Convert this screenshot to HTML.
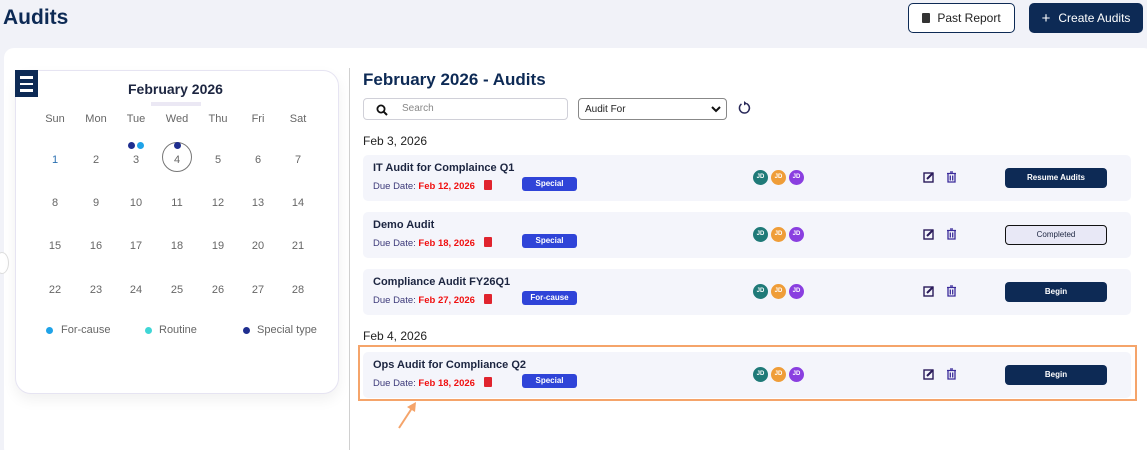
<!DOCTYPE html>
<html><head><style>
*{box-sizing:border-box;margin:0;padding:0}
html,body{width:1147px;height:450px;overflow:hidden}
body{background:#f1f2f8;font-family:"Liberation Sans",sans-serif;position:relative}
.abs{position:absolute}
h1{position:absolute;left:3px;top:6px;font-size:21px;color:#0d2a55;font-weight:bold}
.btn1{left:908px;top:3px;width:107px;height:30px;border:1px solid #0d2a55;border-radius:5px;background:#fff;font-size:12px;color:#222;display:flex;align-items:center;justify-content:center;gap:7px}
.btn2{left:1029px;top:3px;width:114px;height:30px;border-radius:5px;background:#0d2a55;color:#fff;font-size:12px;display:flex;align-items:center;justify-content:center;gap:8px}
.panel{left:4px;top:48px;width:1150px;height:410px;background:#fff;border-radius:10px}
.cal{left:15px;top:70px;width:324px;height:324px;border:1px solid #e6e4f2;border-radius:16px;background:#fff;box-shadow:0 6px 14px rgba(0,0,0,0.06)}
.menu{left:15px;top:70px;width:23px;height:27px;background:#0d2a55}
.menu i{position:absolute;left:5px;width:13px;height:2.5px;background:#fff}
.c{position:absolute;width:40px;text-align:center;font-size:11px;color:#666;transform:translateX(-20px)}
.dot{position:absolute;width:7px;height:7px;border-radius:50%}
.row{position:absolute;left:363px;width:768px;height:46px;background:#f4f5fb;border-radius:5px}
.t{position:absolute;left:10px;top:7px;font-size:11px;font-weight:bold;color:#1c2540}
.d{position:absolute;left:10px;top:26px;font-size:9.5px;color:#3d3a7a}
.d b{color:#f01010}
.pdf{position:absolute;left:121px;top:25px;width:8px;height:10px;background:#e0242e;border-radius:1px}
.tag{position:absolute;left:159px;top:22px;width:55px;height:14px;background:#2f44d8;border-radius:3px;color:#fff;font-size:8px;font-weight:bold;text-align:center;line-height:14px}
.av{position:absolute;top:15px;width:15px;height:15px;border-radius:50%;color:#fff;font-size:6px;font-weight:bold;text-align:center;line-height:15px}
.act{position:absolute;left:642px;top:13px;width:102px;height:20px;border-radius:4px;background:#0d2a55;color:#fff;font-size:8px;font-weight:bold;text-align:center;line-height:20px}
.ic{position:absolute;top:16px}
.date{position:absolute;left:363px;font-size:12px;color:#222}
</style></head><body>
<h1>Audits</h1>
<div class="abs btn1"><span style="display:inline-block;width:8px;height:10px;background:#333;border-radius:1px"></span>Past Report</div>
<div class="abs btn2"><span style="font-size:15px">+</span>Create Audits</div>
<div class="abs panel"></div>
<div class="abs" style="left:-5px;top:252px;width:14px;height:22px;border-radius:50%;background:#fff;border:1px solid #ddd"></div>
<div class="abs cal"></div>
<div class="abs menu"><i style="top:6px"></i><i style="top:12.5px"></i><i style="top:19px"></i></div>
<div class="abs" style="left:128px;top:81px;font-size:14px;font-weight:bold;color:#1c2540">February 2026</div>
<div class="abs" style="left:151px;top:102px;width:50px;height:4px;background:#ebe8f4"></div>
<div style="position:absolute;left:0;top:113px">
<div class="c" style="left:55px">Sun</div><div class="c" style="left:96px">Mon</div><div class="c" style="left:136px">Tue</div><div class="c" style="left:177px">Wed</div><div class="c" style="left:218px">Thu</div><div class="c" style="left:258px">Fri</div><div class="c" style="left:298px">Sat</div>
</div>
<div class="abs" style="left:162px;top:142px;width:30px;height:30px;border:1px solid #777;border-radius:50%"></div>
<div class="dot" style="left:128px;top:142px;background:#1f2e8f"></div>
<div class="dot" style="left:137px;top:142px;background:#1fa3e8"></div>
<div class="dot" style="left:174px;top:142px;background:#1f2e8f"></div>
<div style="position:absolute;left:0;top:154px">
<div class="c" style="left:55px;color:#2a6fb0">1</div><div class="c" style="left:96px">2</div><div class="c" style="left:136px">3</div><div class="c" style="left:177px">4</div><div class="c" style="left:218px">5</div><div class="c" style="left:258px">6</div><div class="c" style="left:298px">7</div>
</div>
<div style="position:absolute;left:0;top:197px">
<div class="c" style="left:55px">8</div><div class="c" style="left:96px">9</div><div class="c" style="left:136px">10</div><div class="c" style="left:177px">11</div><div class="c" style="left:218px">12</div><div class="c" style="left:258px">13</div><div class="c" style="left:298px">14</div>
</div>
<div style="position:absolute;left:0;top:240px">
<div class="c" style="left:55px">15</div><div class="c" style="left:96px">16</div><div class="c" style="left:136px">17</div><div class="c" style="left:177px">18</div><div class="c" style="left:218px">19</div><div class="c" style="left:258px">20</div><div class="c" style="left:298px">21</div>
</div>
<div style="position:absolute;left:0;top:284px">
<div class="c" style="left:55px">22</div><div class="c" style="left:96px">23</div><div class="c" style="left:136px">24</div><div class="c" style="left:177px">25</div><div class="c" style="left:218px">26</div><div class="c" style="left:258px">27</div><div class="c" style="left:298px">28</div>
</div>
<div class="dot" style="left:46px;top:327px;background:#1fa3e8"></div><div class="abs" style="left:61px;top:324px;font-size:11px;color:#666">For-cause</div>
<div class="dot" style="left:145px;top:327px;background:#3fd6d6"></div><div class="abs" style="left:159px;top:324px;font-size:11px;color:#666">Routine</div>
<div class="dot" style="left:243px;top:327px;background:#1f2e8f"></div><div class="abs" style="left:257px;top:324px;font-size:11px;color:#666">Special type</div>
<div class="abs" style="left:349px;top:68px;width:1px;height:382px;background:#d0d0d0"></div>
<div class="abs" style="left:363px;top:70px;font-size:17px;font-weight:bold;color:#0d2a55">February 2026 - Audits</div>
<div class="abs" style="left:363px;top:98px;width:205px;height:22px;border:1px solid #d0d0d8;border-radius:4px;background:#fff">
<svg class="abs" style="left:12px;top:5px" width="12" height="12" viewBox="0 0 12 12"><circle cx="5" cy="5" r="3.6" fill="none" stroke="#111" stroke-width="1.8"/><path d="M7.6 7.6L11 11" stroke="#111" stroke-width="2"/></svg>
<span class="abs" style="left:38px;top:4px;font-size:10px;color:#888">Search</span></div>
<div class="abs" style="left:578px;top:98px;width:149px;height:22px;border:1px solid #888;border-radius:4px;background:#fff">
<span class="abs" style="left:6px;top:5px;font-size:10px;color:#222">Audit For</span>
<svg class="abs" style="left:132px;top:7px" width="10" height="7" viewBox="0 0 10 7"><path d="M1 1l4 4 4-4" stroke="#111" stroke-width="2" fill="none"/></svg></div>
<svg class="abs" style="left:737px;top:100px" width="15" height="16" viewBox="0 0 15 16"><path d="M9.5 3.5A5 5 0 1 1 4.5 4" stroke="#2a2a5a" stroke-width="1.5" fill="none"/><path d="M7 1l3 2.5-3 2z" fill="#2a2a5a"/></svg>
<div class="date" style="top:134px">Feb 3, 2026</div>
<div class="date" style="top:329px">Feb 4, 2026</div>

<div class="row" style="top:155px"><div class="t">IT Audit for Complaince Q1</div><div class="d">Due Date: <b>Feb 12, 2026</b></div><div class="pdf"></div><div class="tag">Special</div>
<div class="av" style="left:390px;background:#1f7a78">JD</div><div class="av" style="left:408px;background:#ef9d38">JD</div><div class="av" style="left:426px;background:#8a3fe0">JD</div>
<svg class="ic" style="left:560px" width="12" height="12" viewBox="0 0 12 12"><rect x="1" y="2" width="9" height="9" fill="none" stroke="#2a1a5a" stroke-width="1.4"/><path d="M4 8l6-6" stroke="#2a1a5a" stroke-width="2"/></svg>
<svg class="ic" style="left:583px" width="11" height="12" viewBox="0 0 11 12"><path d="M1 2.5h9M4 1h3M2 3v8h7V3M4.3 4.5v5M6.7 4.5v5" stroke="#3a2a9a" stroke-width="1.3" fill="none"/></svg>
<div class="act">Resume Audits</div></div>

<div class="row" style="top:212px"><div class="t">Demo Audit</div><div class="d">Due Date: <b>Feb 18, 2026</b></div><div class="pdf"></div><div class="tag">Special</div>
<div class="av" style="left:390px;background:#1f7a78">JD</div><div class="av" style="left:408px;background:#ef9d38">JD</div><div class="av" style="left:426px;background:#8a3fe0">JD</div>
<svg class="ic" style="left:560px" width="12" height="12" viewBox="0 0 12 12"><rect x="1" y="2" width="9" height="9" fill="none" stroke="#2a1a5a" stroke-width="1.4"/><path d="M4 8l6-6" stroke="#2a1a5a" stroke-width="2"/></svg>
<svg class="ic" style="left:583px" width="11" height="12" viewBox="0 0 11 12"><path d="M1 2.5h9M4 1h3M2 3v8h7V3M4.3 4.5v5M6.7 4.5v5" stroke="#3a2a9a" stroke-width="1.3" fill="none"/></svg>
<div class="act" style="background:#e8e8f6;color:#1c2540;border:1px solid #111;font-weight:normal;line-height:18px">Completed</div></div>

<div class="row" style="top:269px"><div class="t">Compliance Audit FY26Q1</div><div class="d">Due Date: <b>Feb 27, 2026</b></div><div class="pdf"></div><div class="tag">For-cause</div>
<div class="av" style="left:390px;background:#1f7a78">JD</div><div class="av" style="left:408px;background:#ef9d38">JD</div><div class="av" style="left:426px;background:#8a3fe0">JD</div>
<svg class="ic" style="left:560px" width="12" height="12" viewBox="0 0 12 12"><rect x="1" y="2" width="9" height="9" fill="none" stroke="#2a1a5a" stroke-width="1.4"/><path d="M4 8l6-6" stroke="#2a1a5a" stroke-width="2"/></svg>
<svg class="ic" style="left:583px" width="11" height="12" viewBox="0 0 11 12"><path d="M1 2.5h9M4 1h3M2 3v8h7V3M4.3 4.5v5M6.7 4.5v5" stroke="#3a2a9a" stroke-width="1.3" fill="none"/></svg>
<div class="act">Begin</div></div>

<div class="abs" style="left:358px;top:345px;width:779px;height:56px;border:2px solid #f5a46a"></div>
<div class="row" style="top:352px;left:363px;width:768px"><div class="t">Ops Audit for Compliance Q2</div><div class="d">Due Date: <b>Feb 18, 2026</b></div><div class="pdf"></div><div class="tag">Special</div>
<div class="av" style="left:390px;background:#1f7a78">JD</div><div class="av" style="left:408px;background:#ef9d38">JD</div><div class="av" style="left:426px;background:#8a3fe0">JD</div>
<svg class="ic" style="left:560px" width="12" height="12" viewBox="0 0 12 12"><rect x="1" y="2" width="9" height="9" fill="none" stroke="#2a1a5a" stroke-width="1.4"/><path d="M4 8l6-6" stroke="#2a1a5a" stroke-width="2"/></svg>
<svg class="ic" style="left:583px" width="11" height="12" viewBox="0 0 11 12"><path d="M1 2.5h9M4 1h3M2 3v8h7V3M4.3 4.5v5M6.7 4.5v5" stroke="#3a2a9a" stroke-width="1.3" fill="none"/></svg>
<div class="act">Begin</div></div>
<svg class="abs" style="left:396px;top:400px" width="24" height="30" viewBox="0 0 24 30"><path d="M3 28L18 5" stroke="#f5a46a" stroke-width="2"/><path d="M20 2l-1 10-8-5z" fill="#f5a46a"/></svg>
</body></html>
